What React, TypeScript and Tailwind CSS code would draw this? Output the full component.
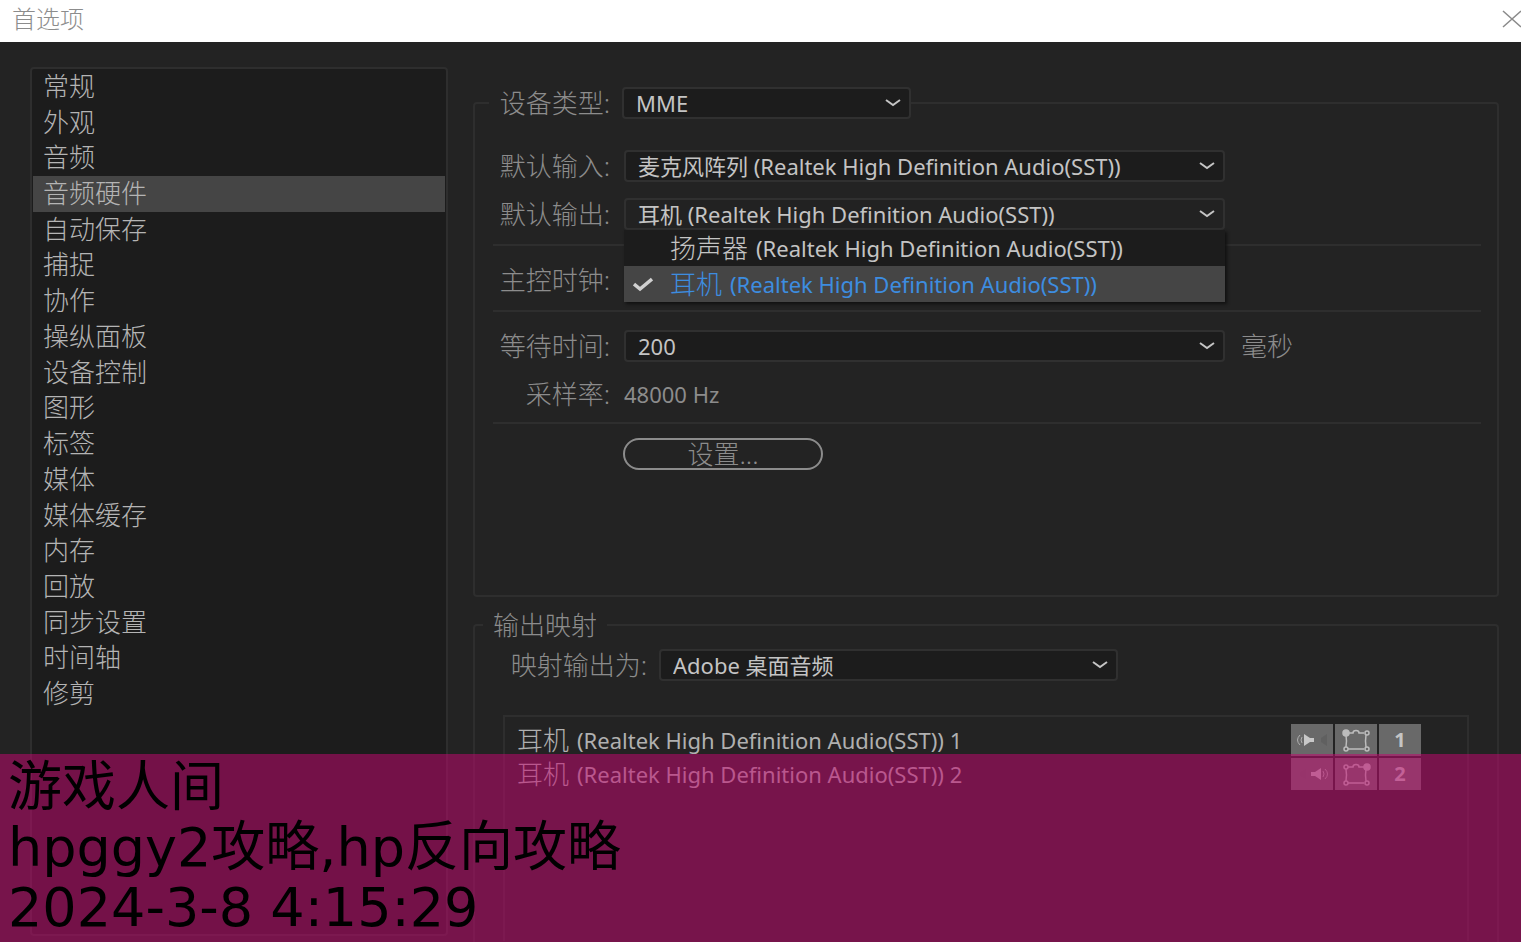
import { useState } from "react";
import type { ReactNode } from "react";

const SECTIONS = [
  "常规",
  "外观",
  "音频",
  "音频硬件",
  "自动保存",
  "捕捉",
  "协作",
  "操纵面板",
  "设备控制",
  "图形",
  "标签",
  "媒体",
  "媒体缓存",
  "内存",
  "回放",
  "同步设置",
  "时间轴",
  "修剪",
];

const OUTPUTS = [
  { cjk: "扬声器", device: "(Realtek High Definition Audio(SST))" },
  { cjk: "耳机", device: "(Realtek High Definition Audio(SST))" },
];

const UI_FONT = "font-['Noto_Sans','Noto_Sans_CJK_SC',sans-serif]";
const LABEL = "text-[26px] leading-8 font-light text-[#8c8c8c]";

type SelectProps = { id: string; options: string[]; className?: string; open?: boolean };

function Select({ id, options, className = "", open = false }: SelectProps) {
  return (
    <div className={`relative h-8 ${className}`}>
      <select
        id={id}
        className={`block h-8 w-full appearance-none rounded border-2 border-[#303030] pr-10 pl-3 text-[22px] leading-7 text-[#c4c4c4] outline-none ${
          open ? "bg-[#222222]" : "bg-[#1c1c1c]"
        }`}
      >
        {options.map((option) => (
          <option key={option}>{option}</option>
        ))}
      </select>
      <svg
        className="pointer-events-none absolute top-2 right-2 h-4 w-5"
        viewBox="0 0 20 16"
        fill="none"
        stroke="#c4c4c4"
        strokeWidth="2"
      >
        <path d="M3 5L10 10L17 5" />
      </svg>
    </div>
  );
}

function Row({ id, label, children }: { id?: string; label: string; children?: ReactNode }) {
  return (
    <div className="flex h-8 items-center">
      <label htmlFor={id} className={`w-[117px] shrink-0 text-right whitespace-nowrap ${LABEL}`}>
        {label}
      </label>
      <div className="ml-3.5 flex min-w-0 flex-1 items-center gap-4">{children}</div>
    </div>
  );
}

function Divider({ className = "" }: { className?: string }) {
  return <hr className={`border-t-2 border-[#2e2e2e] ${className}`} />;
}

function SpeakerIcon({ right = false }: { right?: boolean }) {
  return (
    <svg className="h-8 w-10" viewBox="0 0 40 32" fill="none">
      {right ? (
        <>
          <path d="M19 14h4l6-4v12l-6-4h-4z" fill="#bdbdbd" />
          <path d="M31 13q2 3 0 6M33 11q5 5 0 10" stroke="#b0b0b0" />
          <path d="M14 11v10l-6-3v-4z" fill="#666" />
        </>
      ) : (
        <>
          <path d="M22 14h-4l-6-4v12l6-4h4z" fill="#c8c8c8" />
          <path d="M10 13q-2 3 0 6M8 11q-5 5 0 10" stroke="#b0b0b0" />
          <path d="M35 10v12l-6-4v-4z" fill="#606060" />
        </>
      )}
    </svg>
  );
}

function RoomIcon({ right = false }: { right?: boolean }) {
  return (
    <svg className="h-8 w-10" viewBox="0 0 40 32" fill="none" stroke="#bdbdbd" strokeWidth="1.5">
      <path d="M12 9h5q0-2.5 3-2.5t3 2.5h5M30 11q-1 6 0 12M28 25h-16M10 23q1-6 0-12" />
      <circle cx="10" cy="9" r={right ? 2 : 3} fill={right ? "none" : "#bdbdbd"} />
      <circle cx="31" cy="9" r={right ? 3 : 2} fill={right ? "#bdbdbd" : "none"} />
      <circle cx="10" cy="25" r="2" />
      <circle cx="31" cy="25" r="2" />
    </svg>
  );
}

function Sidebar() {
  const [active, setActive] = useState("音频硬件");

  return (
    <nav className="w-[418px] shrink-0 rounded border-2 border-[#2e2e2e] bg-[#1c1c1c] px-px">
      <ul className="grid h-[643px] auto-rows-fr">
        {SECTIONS.map((section) => (
          <li key={section} className="flex">
            <button
              type="button"
              onClick={() => setActive(section)}
              className={`flex w-full items-center pb-0.5 pl-2.5 text-left text-[26px] leading-8 font-light text-[#b4b4b4] ${
                section === active ? "bg-[#454545]" : ""
              }`}
            >
              {section}
            </button>
          </li>
        ))}
      </ul>
    </nav>
  );
}

function OutputMenu() {
  const [selected, setSelected] = useState(1);

  return (
    <ul
      role="listbox"
      aria-label="默认输出"
      className="absolute inset-x-0 top-8 z-10 bg-[#1c1c1c] shadow-[2px_2px_3px_#111]"
    >
      {OUTPUTS.map((output, i) => (
        <li
          key={output.cjk}
          role="option"
          aria-selected={i === selected}
          onClick={() => setSelected(i)}
          className={`flex h-9 items-center gap-2 text-[22px] ${
            i === selected ? "bg-[#454545] text-[#3d8de0]" : "text-[#c4c4c4]"
          }`}
        >
          <span className="flex w-[38px] shrink-0 justify-center">
            {i === selected && (
              <svg className="h-4 w-5" viewBox="0 0 20 16" fill="none" stroke="#d0d0d0" strokeWidth="3.5">
                <path d="M1 8l6 5L19 3" />
              </svg>
            )}
          </span>
          <span className="text-[26px] leading-8 font-light">{output.cjk}</span>
          <span>{output.device}</span>
        </li>
      ))}
    </ul>
  );
}

function DevicePanel() {
  return (
    <fieldset className="mt-5 h-[510px] min-w-0 rounded border-2 border-[#2e2e2e] pr-4 pl-[18px]">
      <legend className="-ml-1 flex items-center bg-[#232323] pl-2">
        <label htmlFor="device-type" className={`w-[113px] text-right whitespace-nowrap ${LABEL}`}>
          设备类型:
        </label>
        <Select id="device-type" options={["MME", "ASIO"]} className="ml-3 w-[289px]" />
      </legend>

      <div className="flex flex-col gap-4 pt-[31px]">
        <Row id="input" label="默认输入:">
          <Select
            id="input"
            options={["麦克风阵列 (Realtek High Definition Audio(SST))"]}
            className="max-w-[601px] flex-1"
          />
        </Row>
        <Row id="output" label="默认输出:">
          <div className="relative max-w-[601px] flex-1">
            <Select id="output" options={["耳机 (Realtek High Definition Audio(SST))"]} open />
            <OutputMenu />
          </div>
        </Row>
      </div>

      <Divider className="mt-3.5 mb-[18px]" />
      <Row label="主控时钟:" />
      <Divider className="mt-3.5 mb-[18px]" />

      <div className="flex flex-col gap-4">
        <Row id="latency" label="等待时间:">
          <Select id="latency" options={["200", "100", "50"]} className="max-w-[601px] flex-1" />
          <span className={LABEL}>毫秒</span>
        </Row>
        <Row label="采样率:">
          <span className="text-[22px] text-[#8c8c8c]">48000 Hz</span>
        </Row>
      </div>

      <Divider className="mt-3 mb-3.5" />
      <button
        type="button"
        className="ml-[130px] flex h-8 w-[200px] items-center justify-center rounded-full border-2 border-[#8c8c8c] text-[26px] leading-7 font-light text-[#8c8c8c]"
      >
        设置...
      </button>
    </fieldset>
  );
}

function MappingPanel() {
  return (
    <fieldset className="mt-3 min-w-0 flex-1 rounded-t border-2 border-b-0 border-[#2e2e2e] pr-7 pl-7">
      <legend className={`-ml-5 px-2.5 ${LABEL}`}>输出映射</legend>

      <div className="flex items-center pt-2">
        <label htmlFor="mapping" className={`w-[144px] text-right whitespace-nowrap ${LABEL}`}>
          映射输出为:
        </label>
        <Select id="mapping" options={["Adobe 桌面音频"]} className="ml-3 max-w-[459px] flex-1" />
      </div>

      <div className="mt-[34px] min-h-[226px] border-2 border-b-0 border-[#2e2e2e] pt-1.5 pr-[46px] pl-3">
        <table className="w-full border-collapse">
          <tbody>
            {[1, 2].map((channel) => (
              <tr key={channel} className="h-[34px]">
                <td className="p-0 text-[22px] leading-8 text-[#b0b0b0]">
                  <div className="flex items-center gap-2">
                    <span className="text-[26px] font-light">耳机</span>
                    <span>(Realtek High Definition Audio(SST)) {channel}</span>
                  </div>
                </td>
                <td className="w-[130px] p-0">
                  <div className="flex gap-0.5">
                    <span className="flex h-8 flex-1 items-center justify-center bg-[#696969]">
                      <SpeakerIcon right={channel === 2} />
                    </span>
                    <span className="flex h-8 flex-1 items-center justify-center bg-[#696969]">
                      <RoomIcon right={channel === 2} />
                    </span>
                    <span className="flex h-8 flex-1 items-center justify-center bg-[#696969] text-xl font-bold text-[#c4c4c4]">
                      {channel}
                    </span>
                  </div>
                </td>
              </tr>
            ))}
          </tbody>
        </table>
      </div>
    </fieldset>
  );
}

export default function App() {
  return (
    <div className={`relative flex min-h-screen flex-col bg-[#232323] ${UI_FONT}`}>
      <header className="flex h-[42px] shrink-0 items-center justify-between overflow-hidden bg-white pl-3">
        <h1 className="pb-1 text-2xl leading-8 font-light text-[#8c8c8c]">首选项</h1>
        <button type="button" aria-label="关闭" className="pb-1">
          <svg className="h-5 w-5" viewBox="0 0 20 20" fill="none" stroke="#8a8a8a" strokeWidth="1.5">
            <path d="M2 2L20 18M20 2L2 18" />
          </svg>
        </button>
      </header>

      <main className="flex flex-1 gap-[25px] pt-[25px] pr-[22px] pl-[30px]">
        <div className="flex pb-1.5">
          <Sidebar />
        </div>
        <div className="flex min-w-0 flex-1 flex-col">
          <DevicePanel />
          <MappingPanel />
        </div>
      </main>

      {/* Faixa inferior com título e data */}
      <footer className="absolute inset-x-0 bottom-0 z-20 h-[188px] bg-[#c3076f]/53 pt-1 pl-2 font-['DejaVu_Sans','Noto_Sans_CJK_SC',sans-serif] text-[54px] leading-[60px] text-black">
        <p>游戏人间</p>
        <p>hpggy2攻略,hp反向攻略</p>
        <p>2024-3-8 4:15:29</p>
      </footer>
    </div>
  );
}
